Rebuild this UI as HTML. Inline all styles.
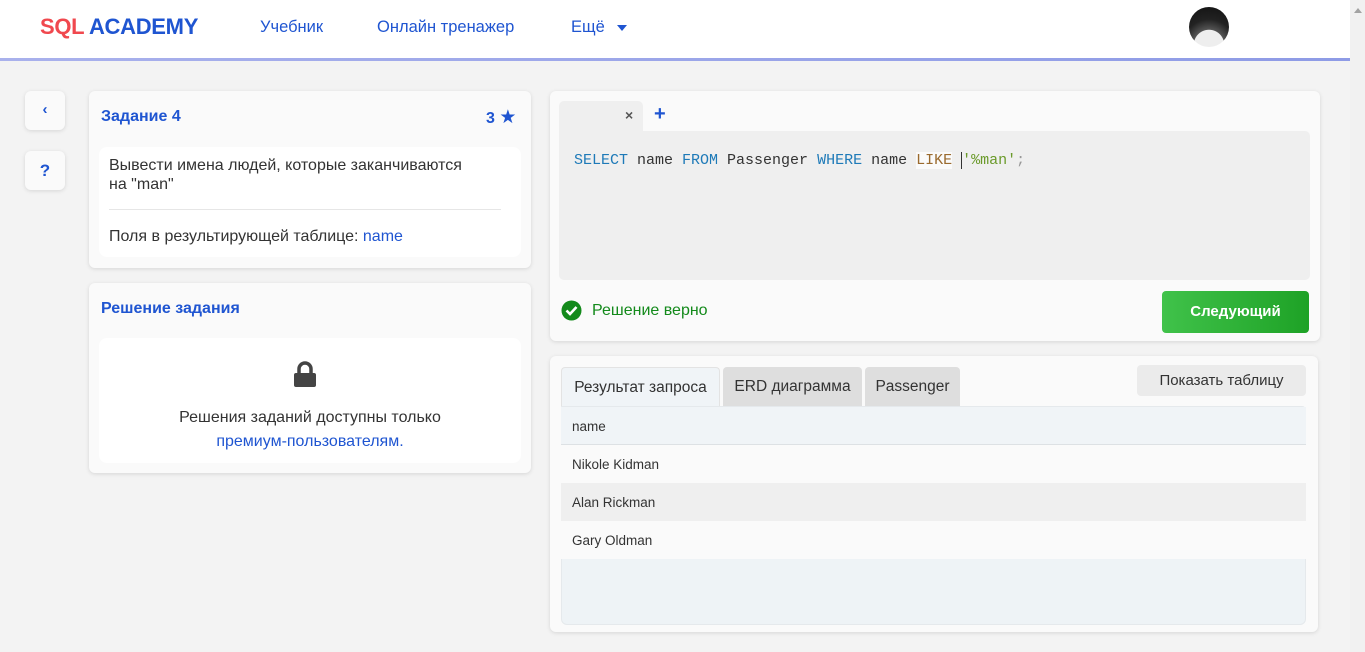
<!DOCTYPE html>
<html><head><meta charset="utf-8"><style>
*{box-sizing:border-box;margin:0;padding:0}
body{width:1365px;height:652px;overflow:hidden;background:#f3f3f3;font-family:"Liberation Sans","DejaVu Sans",sans-serif;position:relative;color:#333}
.abs{position:absolute}
.hdr{left:0;top:0;width:1350px;height:58px;background:#fff}
.line{left:0;top:58px;width:1350px;height:3px;background:linear-gradient(90deg,#a9b1ec,#8e9be6)}
.sb{left:1350px;top:0;width:15px;height:652px;background:#f1f1f1}
.nav{top:18px;font-size:16.5px;color:#1f55d1}
.card{background:#fafafa;border-radius:6px;box-shadow:0 1px 4px rgba(0,0,0,.12)}
.wbox{background:#fff;border-radius:8px}
.blue{color:#1f55d1}
.mono{font-family:"Liberation Mono","DejaVu Sans Mono",monospace}
.tab{top:367px;height:39px;border-radius:4px 4px 0 0;font-size:15.5px;padding-top:11px;text-align:center;color:#333}
.row{left:561px;width:745px;height:38px;font-size:13.5px;padding:12px 11px;color:#333}
</style></head><body>
<div class="abs hdr"></div><div class="abs line"></div><div class="abs sb"><div style="margin:8px auto 0;width:0;height:0;border-left:4px solid transparent;border-right:4px solid transparent;border-bottom:5px solid #a3a3a3"></div></div>
<div class="abs" style="left:40px;top:14px;font-size:22px;font-weight:bold;letter-spacing:-0.3px"><span style="color:#f0484e">SQL</span> <span style="color:#1f55d1">ACADEMY</span></div>
<div class="abs nav" style="left:260px">Учебник</div>
<div class="abs nav" style="left:377px">Онлайн тренажер</div>
<div class="abs nav" style="left:571px">Ещё <span style="display:inline-block;margin-left:8px;border-left:5px solid transparent;border-right:5px solid transparent;border-top:6px solid #1f55d1;vertical-align:middle"></span></div>
<div class="abs" style="left:1189px;top:7px;width:40px;height:40px;border-radius:50%;background:radial-gradient(circle at 50% 95%,#eee 0 35%,#555 36%,#222 60%,#111)"></div>

<div class="abs card" style="left:25px;top:91px;width:40px;height:39px;text-align:center;line-height:37px;color:#1f55d1;font-weight:bold;font-size:15px">‹</div>
<div class="abs card" style="left:25px;top:151px;width:40px;height:39px;text-align:center;line-height:39px;color:#1f55d1;font-weight:bold;font-size:17px">?</div>

<div class="abs card" style="left:89px;top:91px;width:442px;height:177px"></div>
<div class="abs blue" style="left:101px;top:108px;font-size:16px;font-weight:bold">Задание 4</div>
<div class="abs blue" style="left:486px;top:106px;font-size:16px;font-weight:bold">3 <span style="font-size:19px">★</span></div>
<div class="abs wbox" style="left:99px;top:147px;width:422px;height:110px"></div>
<div class="abs" style="left:109px;top:156px;width:360px;font-size:16px;line-height:19px">Вывести имена людей, которые заканчиваются на "man"</div>
<div class="abs" style="left:109px;top:209px;width:392px;height:1px;background:#e6e6e6"></div>
<div class="abs" style="left:109px;top:228px;font-size:16px">Поля в результирующей таблице: <span class="blue">name</span></div>

<div class="abs card" style="left:89px;top:283px;width:442px;height:190px"></div>
<div class="abs blue" style="left:101px;top:300px;font-size:16px;font-weight:bold">Решение задания</div>
<div class="abs wbox" style="left:99px;top:338px;width:422px;height:125px"></div>
<svg class="abs" style="left:293px;top:361px" width="24" height="27" viewBox="0 0 24 27"><path d="M6 12V8a6 6 0 0 1 12 0v4" fill="none" stroke="#444" stroke-width="3.5"/><rect x="1" y="12" width="22" height="14" rx="2" fill="#444"/></svg>
<div class="abs" style="left:99px;top:406px;width:422px;text-align:center;font-size:16px;line-height:24px">Решения заданий доступны только<br><span class="blue">премиум-пользователям.</span></div>

<div class="abs card" style="left:550px;top:91px;width:770px;height:250px"></div>
<div class="abs" style="left:559px;top:101px;width:84px;height:31px;background:#efefef;border-radius:5px 5px 0 0"></div>
<div class="abs" style="left:625px;top:107px;font-size:14px;color:#555;font-weight:bold">×</div>
<div class="abs blue" style="left:654px;top:103px;font-size:20px;font-weight:bold">+</div>
<div class="abs" style="left:559px;top:131px;width:751px;height:149px;background:#efefef;border-radius:0 5px 5px 5px"></div>
<div class="abs mono" style="left:574px;top:152px;font-size:15px;color:#333;white-space:pre"><span style="color:#1e7ab8">SELECT</span> name <span style="color:#1e7ab8">FROM</span> Passenger <span style="color:#1e7ab8">WHERE</span> name <span style="color:#9a6a2e;background:#fafafa">LIKE</span> <span style="border-left:1px solid #333;color:#6a9a2a">'%man'</span><span style="color:#999">;</span></div>
<svg class="abs" style="left:561px;top:300px" width="21" height="21"><circle cx="10.5" cy="10.5" r="10" fill="#138a1b"/><path d="M5.5 10.5l3.5 3.5 6.5-7" fill="none" stroke="#fff" stroke-width="2.6"/></svg>
<div class="abs" style="left:592px;top:302px;font-size:16px;color:#138a1b">Решение верно</div>
<div class="abs" style="left:1162px;top:291px;width:147px;height:42px;border-radius:4px;background:linear-gradient(90deg,#40c24a,#1ea226);color:#fff;font-weight:bold;font-size:15px;text-align:center;line-height:42px">Следующий</div>

<div class="abs card" style="left:550px;top:356px;width:768px;height:276px"></div>
<div class="abs tab" style="left:561px;width:159px;background:#f0f4f7;border:1px solid #e3e3e3;border-bottom:none">Результат запроса</div>
<div class="abs tab" style="left:723px;width:139px;background:#dedede">ERD диаграмма</div>
<div class="abs tab" style="left:865px;width:95px;background:#dedede">Passenger</div>
<div class="abs" style="left:1137px;top:365px;width:169px;height:31px;background:#ebebeb;border-radius:4px;font-size:15px;text-align:center;line-height:31px">Показать таблицу</div>
<div class="abs" style="left:561px;top:406px;width:745px;height:219px;background:#eef3f6;border:1px solid #e5e9ec;border-radius:0 4px 6px 6px"></div>
<div class="abs row" style="top:407px;background:#f0f4f7;border-bottom:1px solid #dde1e4">name</div>
<div class="abs row" style="top:445px;background:#fafafa">Nikole Kidman</div>
<div class="abs row" style="top:483px;background:#efefef">Alan Rickman</div>
<div class="abs row" style="top:521px;background:#fafafa">Gary Oldman</div>
</body></html>
